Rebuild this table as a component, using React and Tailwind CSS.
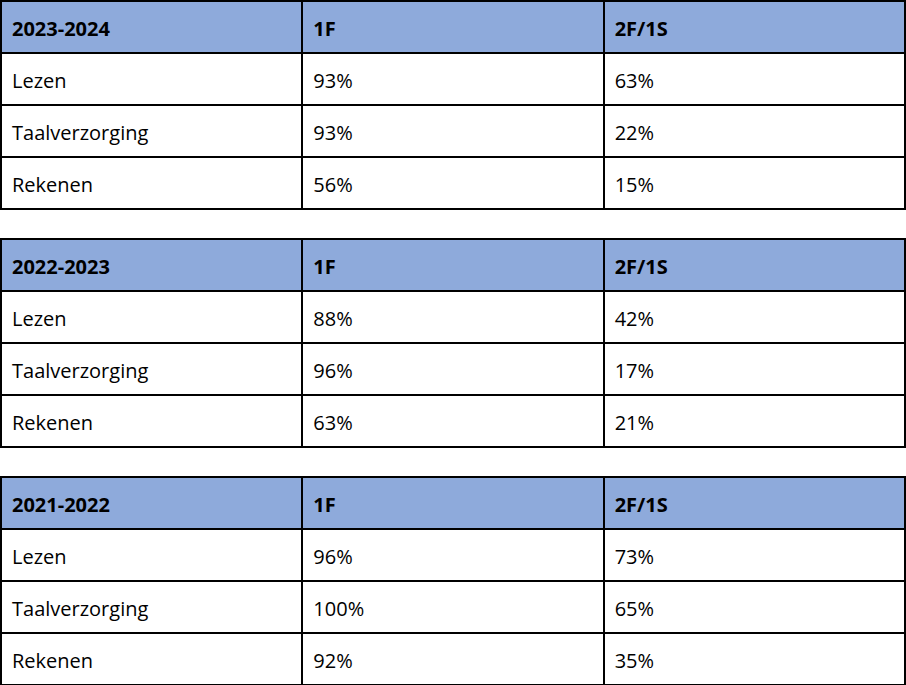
const tables = [
  {
    year: "2023-2024",
    rows: [
      ["Lezen", "93%", "63%"],
      ["Taalverzorging", "93%", "22%"],
      ["Rekenen", "56%", "15%"],
    ],
  },
  {
    year: "2022-2023",
    rows: [
      ["Lezen", "88%", "42%"],
      ["Taalverzorging", "96%", "17%"],
      ["Rekenen", "63%", "21%"],
    ],
  },
  {
    year: "2021-2022",
    rows: [
      ["Lezen", "96%", "73%"],
      ["Taalverzorging", "100%", "65%"],
      ["Rekenen", "92%", "35%"],
    ],
  },
];

function ScoreTable({ year, rows }) {
  return (
    <table className="w-full table-fixed border-collapse border-2 border-black">
      <thead>
        <tr className="h-[52px] bg-[#8eaadb]">
          <th className="border-2 border-black px-[10px] pt-[3px] text-left font-bold">{year}</th>
          <th className="border-2 border-black px-[10px] pt-[3px] text-left font-bold">1F</th>
          <th className="border-2 border-black px-[10px] pt-[3px] text-left font-bold">2F/1S</th>
        </tr>
      </thead>
      <tbody>
        {rows.map((r) => (
          <tr key={r[0]} className="h-[52px]">
            {r.map((c, i) => (
              <td key={i} className="border-2 border-black px-[10px] pt-[3px]">{c}</td>
            ))}
          </tr>
        ))}
      </tbody>
    </table>
  );
}

export default function App() {
  return (
    <div className="w-[906px] bg-white text-[20px] leading-none text-black" style={{ fontFamily: '"Open Sans", sans-serif' }}>
      <div className="flex flex-col gap-[28px]">
        {tables.map((t) => (
          <ScoreTable key={t.year} year={t.year} rows={t.rows} />
        ))}
      </div>
    </div>
  );
}
